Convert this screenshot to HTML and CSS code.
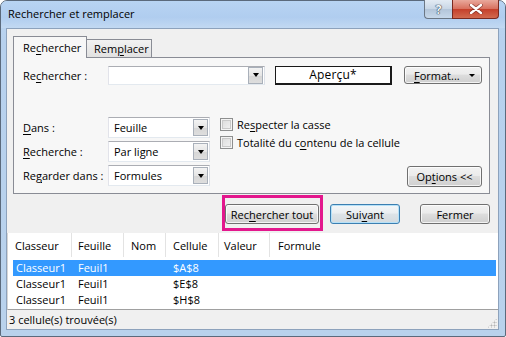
FILE: index.html
```html
<!DOCTYPE html>
<html lang="fr">
<head>
<meta charset="utf-8">
<title>Rechercher et remplacer</title>
<link rel="stylesheet" href="styles.css">
</head>
<body>
<div class="window">
  <div class="titlebar">
    <span class="title">Rechercher et remplacer</span>
    <div class="caption-btns">
      <div class="cbtn help">?</div>
      <div class="cbtn close">
        <svg width="14" height="10" viewBox="0 0 14 10"><path d="M2 1 L12 9 M12 1 L2 9" stroke="#5a1a12" stroke-width="4" stroke-linecap="round" opacity="0.55"/><path d="M2 1 L12 9 M12 1 L2 9" stroke="#fff" stroke-width="2.4" stroke-linecap="round"/></svg>
      </div>
    </div>
  </div>
  <div class="client">
    <div class="tabs">
      <div class="tab active">Re<u>c</u>hercher</div>
      <div class="tab">Rem<u>p</u>lacer</div>
    </div>
    <div class="panel">
      <div class="row-find">
        <label class="lbl">Re<u>c</u>hercher :</label>
        <div class="combo combo-find"><span class="combo-val"></span><span class="drop"><i></i></span></div>
        <div class="preview">Aperçu*</div>
        <div class="btn btn-format"><span><u>F</u>ormat...</span><i class="tri"></i></div>
      </div>
      <div class="opts">
        <div class="selects">
          <div class="sel-row"><label class="lbl"><u>D</u>ans :</label><div class="combo combo-sel"><span class="combo-val">Feuille</span><span class="drop"><i></i></span></div></div>
          <div class="sel-row"><label class="lbl"><u>R</u>echerche :</label><div class="combo combo-sel"><span class="combo-val">Par ligne</span><span class="drop"><i></i></span></div></div>
          <div class="sel-row"><label class="lbl">Re<u>g</u>arder dans :</label><div class="combo combo-sel"><span class="combo-val">Formules</span><span class="drop"><i></i></span></div></div>
        </div>
        <div class="checks">
          <div class="chk-row"><span class="chk"></span><span>Re<u>s</u>pecter la casse</span></div>
          <div class="chk-row"><span class="chk"></span><span>Totalité du c<u>o</u>ntenu de la cellule</span></div>
        </div>
        <div class="btn btn-options">Op<u>t</u>ions &lt;&lt;</div>
      </div>
    </div>
    <div class="actions">
      <div class="highlight"><div class="btn btn-findall">Rec<u>h</u>ercher tout</div></div>
      <div class="btn btn-next default">Sui<u>v</u>ant</div>
      <div class="btn btn-close">Fermer</div>
    </div>
    <div class="results">
      <div class="grid head">
        <div class="c c1">Classeur</div>
        <div class="c c2">Feuille</div>
        <div class="c c3">Nom</div>
        <div class="c c4">Cellule</div>
        <div class="c c5">Valeur</div>
        <div class="c c6">Formule</div>
      </div>
      <div class="grid row selected">
        <div class="c c1">Classeur1</div><div class="c c2">Feuil1</div><div class="c c3"></div><div class="c c4">$A$8</div><div class="c c5"></div><div class="c c6"></div>
      </div>
      <div class="grid row">
        <div class="c c1">Classeur1</div><div class="c c2">Feuil1</div><div class="c c3"></div><div class="c c4">$E$8</div><div class="c c5"></div><div class="c c6"></div>
      </div>
      <div class="grid row">
        <div class="c c1">Classeur1</div><div class="c c2">Feuil1</div><div class="c c3"></div><div class="c c4">$H$8</div><div class="c c5"></div><div class="c c6"></div>
      </div>
    </div>
    <div class="status">
      <span>3 cellule(s) trouvée(s)</span>
      <span class="grip"></span>
    </div>
  </div>
</div>
</body>
</html>
```

FILE: styles.css
```css
* { box-sizing: border-box; }
html, body { margin: 0; padding: 0; }
body {
  width: 506px;
  height: 337px;
  overflow: hidden;
  background: #fff;
  font-family: "Open Sans", "Noto Sans", sans-serif;
  font-size: 11px;
  color: #000;
}
u { text-decoration: underline; text-underline-offset: 2px; text-decoration-thickness: 1px; }

.window {
  width: 506px;
  height: 337px;
  border: 1px solid #5b6a7c;
  border-radius: 7px 7px 2px 2px;
  background: linear-gradient(#bcd6f2, #b7d1ee 40px, #b9d2ec);
  padding: 0 6px 6px 5px;
  display: flex;
  flex-direction: column;
}

.titlebar {
  height: 27px;
  display: flex;
  align-items: flex-start;
  background: linear-gradient(#b8d4f3, #b0cdef 60%, #c2d9f2);
  margin: 0 -6px 0 -5px;
  padding: 0 6px 0 5px;
  border-radius: 6px 6px 0 0;
}
.title {
  margin-top: 5px;
  padding-left: 2px;
  color: #000;
  font-size: 11px;
}
.caption-btns {
  margin-left: auto;
  display: flex;
  margin-top: -1px;
}
.cbtn {
  height: 19px;
  border: 1px solid #6b7785;
  border-top: none;
  display: flex;
  align-items: center;
  justify-content: center;
}
.cbtn.help {
  width: 28px;
  border-radius: 0 0 0 4px;
  border-right: none;
  background: linear-gradient(#e3ebf4, #c8d6e5 50%, #b3c5d9 51%, #c7d8ea);
  color: #f4f7fa;
  font-size: 12px;
  font-weight: 700;
  text-shadow: 0 0 1px #2f3e52, 0 0 1px #2f3e52, 0 0 1px #2f3e52;
}
.cbtn.close {
  width: 47px;
  border-radius: 0 0 4px 0;
  border-color: #7a2a20;
  background: linear-gradient(#e9a99c, #d8715f 48%, #c5402b 52%, #d26a4f);
}

.client {
  flex: 1;
  border: 1px solid #8da2bc;
  background: #f0f0f0;
  display: flex;
  flex-direction: column;
}

.tabs {
  display: flex;
  align-items: flex-end;
  padding: 7px 0 0 6px;
  height: 28px;
  position: relative;
  z-index: 2;
}
.tab {
  height: 18px;
  border: 1px solid #898c95;
  border-bottom: none;
  background: linear-gradient(#f2f2f2, #e1e1e1);
  padding: 1px 0 0 7px;
  width: 65px;
  margin-left: -1px;
}
.tab.active {
  height: 22px;
  width: 74px;
  margin-left: 0;
  margin-bottom: -1px;
  background: #f7f7f7;
  padding: 3px 0 0 9px;
}
.tab.active + .tab { margin-left: 0; border-left: none; width: 65px; }

.panel {
  margin-left: 6px;
  width: 477px;
  height: 137px;
  border: 1px solid #898c95;
  background: #f7f7f7;
  display: flex;
  flex-direction: column;
  padding: 8px 7px 0 9px;
}

.lbl { display: block; width: 85px; flex: none; }

.row-find {
  display: flex;
  align-items: center;
  height: 18px;
}
.combo {
  display: flex;
  align-items: stretch;
  background: #fff;
  border: 1px solid #abadb3;
  border-left-color: #e2e3ea;
  border-right-color: #dbdfe6;
  border-bottom-color: #e3e9ef;
}
.combo-val { flex: 1; padding: 1px 0 0 5px; }
.drop {
  width: 15px;
  margin: 1px 1px 1px 0;
  border: 1px solid #a9b0ba;
  background: linear-gradient(#f3f3f3, #e5e5e5 50%, #d6d6d6 51%, #dedede);
  display: flex;
  align-items: center;
  justify-content: center;
}
.drop i {
  width: 0; height: 0;
  border-left: 3.5px solid transparent;
  border-right: 3.5px solid transparent;
  border-top: 4px solid #000;
}
.combo-find { width: 157px; height: 19px; }
.combo-find .drop { margin-top: 0; margin-bottom: 0; }
.preview {
  margin-left: 10px;
  width: 117px;
  height: 19px;
  border: 1px solid #1a1a1a;
  border-width: 1px 2px 2px 1px;
  background: #fff;
  text-align: center;
  font-size: 12px;
  line-height: 16px;
  letter-spacing: 0.2px;
}
.btn {
  height: 20px;
  border: 1px solid #707070;
  border-radius: 3px;
  background: linear-gradient(#f2f2f2, #ebebeb 45%, #dddddd 50%, #cfcfcf);
  box-shadow: inset 0 0 0 1px rgba(255,255,255,0.75);
  display: flex;
  align-items: center;
  justify-content: center;
  flex: none;
}
.btn-format {
  margin-left: 12px;
  width: 78px;
  height: 18px;
  justify-content: flex-start;
  padding-left: 9px;
}
.btn-format .tri {
  margin-left: auto;
  margin-right: 6px;
  width: 0; height: 0;
  border-left: 3px solid transparent;
  border-right: 3px solid transparent;
  border-top: 3px solid #000;
}

.opts {
  display: flex;
  margin-top: 33px;
  align-items: flex-start;
}
.selects { display: flex; flex-direction: column; gap: 3px; }
.sel-row { display: flex; align-items: center; height: 21px; }
.combo-sel { width: 102px; height: 21px; }
.combo-sel .combo-val { padding-top: 2px; }

.checks {
  display: flex;
  flex-direction: column;
  margin-left: 10px;
  margin-top: 1px;
  gap: 5px;
}
.chk-row { display: flex; align-items: center; height: 13px; gap: 4px; }
.chk {
  width: 13px; height: 13px;
  border: 1px solid #8e8f8f;
  background: linear-gradient(135deg, #d9d9d9, #f4f4f4);
  box-shadow: inset 0 0 0 1px #f4f4f4, inset 0 0 0 2px #c9c9c9;
  flex: none;
}
.btn-options {
  margin-left: auto;
  align-self: flex-end;
  width: 75px;
  height: 21px;
  margin-bottom: -1px;
}

.actions {
  display: flex;
  justify-content: flex-end;
  align-items: flex-start;
  margin-top: 1px;
  height: 36px;
  padding-right: 8px;
}
.highlight {
  border: 3px solid #e3178d;
  padding: 6px 1px 4px 0;
}
.btn-findall { width: 94px; }
.btn-next { width: 70px; margin-left: 7px; margin-top: 9px; }
.btn-next.default {
  border-color: #3c7fb1;
  box-shadow: inset 0 0 0 1px #b6e1f8;
  background: linear-gradient(#f4f7f9, #eaeef1 45%, #dde3e7 50%, #d3dadf);
}
.btn-close { width: 70px; margin-left: 20px; margin-top: 9px; }

.results {
  margin-top: 2px;
  height: 77px;
  background: #fff;
  border-bottom: 1px solid #a0a0a0;
  border-left: 1px solid #d5d5d5;
  padding: 0 2px 0 5px;
}
.grid {
  display: grid;
  grid-template-columns: 59px 52px 42px 53px 51px 1fr;
}
.head { height: 27px; }
.head .c {
  border-right: 1px solid #e3e3e3;
  display: flex;
  align-items: center;
  padding-top: 1px;
  height: 24px;
}
.head .c6 { border-right: none; }
.c { padding-left: 6px; white-space: nowrap; }
.c1 { padding-left: 2px; }
.c3 { padding-left: 7px; }
.c4 { padding-left: 7px; }
.c5 { padding-left: 5px; }
.c6 { padding-left: 8px; }
.row { height: 16px; line-height: 15px; }
.row .c1 { padding-left: 3px; }
.row.selected { background: #3399ff; color: #fff; }

.status {
  flex: 1;
  display: flex;
  align-items: center;
  padding-left: 2px;
  position: relative;
}
.grip {
  position: absolute;
  right: 1px;
  bottom: 1px;
  width: 10px;
  height: 10px;
  background-image: radial-gradient(circle, #b5b5b5 0.9px, transparent 1.1px);
  background-size: 3px 3px;
  clip-path: polygon(100% 0, 100% 100%, 0 100%);
}
```
